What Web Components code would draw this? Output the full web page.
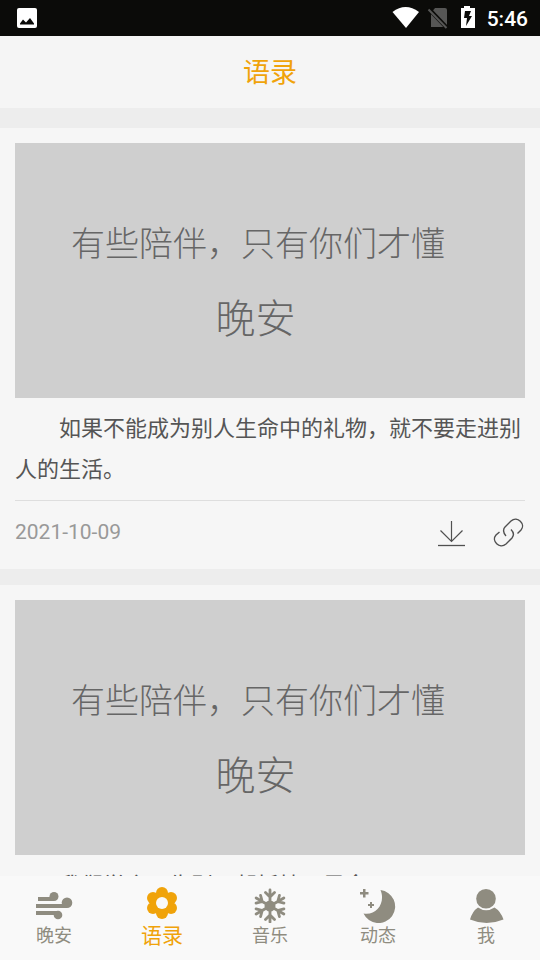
<!DOCTYPE html>
<html lang="zh-CN">
<head>
<meta charset="utf-8">
<meta name="viewport" content="width=device-width, initial-scale=1">
<title>语录</title>
<style>
html, body { height: 100%; margin: 0; }
body { font-family: Roboto, "Noto Sans CJK SC", sans-serif; background: #ededed; color: #555; }
</style>
</head>
<body>
<quote-app></quote-app>
<script>
const define = (name, html) => customElements.define(name, class extends HTMLElement {
  constructor() {
    super();
    const t = document.createElement('template');
    t.innerHTML = html;
    this.attachShadow({ mode: 'open' }).append(t.content.cloneNode(true));
  }
});

define('status-bar', `
<style>
:host { display: flex; align-items: center; height: 36px; flex: none; padding: 0 12px 0 17px; background: #0b0b09; color: #fff; }
svg { display: block; }
.right { margin-left: auto; display: flex; align-items: center; }
time { font-size: 21px; font-weight: 500; line-height: 36px; margin-left: 11px; padding-top: 1px; }
</style>
<svg width="20" height="36" viewBox="0 0 20 36"><rect y="8" width="20" height="20" rx="2" fill="#fff"/><path d="M3 24.5v-1l3-4 3 3 4-4.500 4 5.500v1z" fill="#0b0b09"/></svg>
<div class="right">
<svg width="84" height="36" viewBox="0 0 84 36">
<path d="M0.500 12Q13.500 2 27 12L14 28z" fill="#fff"/>
<path d="M43 8h10q2 0 2 2v17H39V13z" fill="#565655"/><path d="M36 8l20 21" stroke="#0b0b09" stroke-width="4"/><path d="M36.500 9.500l18 18.500" stroke="#565655" stroke-width="2"/>
<path d="M69 8h3V6h6v2h5v20H69z" fill="#fff"/><path d="M73 11h6l-2 5h3l-6 10 1-8h-3z" fill="#0b0b09"/>
</svg>
<time>5:46</time>
</div>`);

define('page-title', `
<style>
:host { display: block; flex: none; background: #f5f5f5; }
h1 { margin: 0; padding: 2px 0 0; font-size: 27px; font-weight: 400; line-height: 70px; text-align: center; color: #f0a30a; }
</style>
<h1><slot></slot></h1>`);

define('quote-picture', `
<style>
:host { display: flex; flex-direction: column; aspect-ratio: 2 / 1; box-sizing: border-box; padding: 76px 81px 0 56px; background: #cfcfcf; color: #666; text-align: center; white-space: nowrap; font-weight: 300; }
.first { font-size: 34px; line-height: 50px; }
.second { font-size: 40px; line-height: 60px; padding-top: 21px; padding-right: 4px; }
</style>
<div class="first">有些陪伴，只有你们才懂</div>
<div class="second">晚安</div>`);

define('icon-button', `
<style>
:host { display: block; }
button { display: block; padding: 0; border: 0; background: none; color: #505050; cursor: pointer; }
::slotted(svg) { display: block; }
</style>
<button type="button"><slot></slot></button>`);

define('quote-card', `
<style>
:host { display: block; background: #f6f6f6; padding: 15px 15px 0; }
p { margin: 0; padding: 10px 0; font-size: 22px; line-height: 41px; text-indent: 2em; color: #555; }
footer { display: flex; align-items: center; height: 68px; border-top: 1px solid #dedede; }
.date { font-size: 21px; line-height: 30px; color: #999; margin-right: auto; padding-bottom: 6px; }
.tools { display: flex; gap: 28px; padding: 0 1px 2px 0; }
</style>
<article>
<quote-picture></quote-picture>
<p><slot></slot></p>
<footer>
<span class="date"><slot name="date"></slot></span>
<div class="tools">
<icon-button><svg role="img" aria-label="下载" width="28" height="32" viewBox="0 0 28 32" fill="none" stroke="currentColor" stroke-width="1.200"><path d="M14.500 3v20.500M3.500 12.500l11 11 11-11"/><path d="M1 27.500h27" stroke-width="1.300"/></svg></icon-button>
<icon-button><svg role="img" aria-label="链接" width="31" height="32" viewBox="0 0 31 32" fill="none" stroke="currentColor" stroke-width="1.400"><path d="M13 18C10 15 10 11 12 9L18 3C24.500 -2.500 33 6 28 12L24.500 15.500M18 11.500C21 14.500 21 17.500 19 20L13 26C6.500 31.500-2 23 3 17L6.500 14"/></svg></icon-button>
</div>
</footer>
</article>`);

define('nav-item', `
<style>
:host { display: block; flex: 1; min-width: 0; color: #8f8c80; font-size: 18px; }
:host([active]) { color: #f0a30a; font-size: 21px; }
a { display: flex; flex-direction: column; align-items: center; color: inherit; text-decoration: none; line-height: 26px; padding-top: 9px; }
::slotted(svg) { display: block; }
</style>
<a href="#"><slot name="icon"></slot><span><slot></slot></span></a>`);

define('tab-bar', `
<style>
:host { display: block; flex: none; background: #f9f9f9; }
nav { display: flex; height: 84px; }
</style>
<nav>
<nav-item><svg slot="icon" width="38" height="38" viewBox="0 0 38 38" fill="currentColor"><path d="M3 12h16v4H3zM1 19h31v4H1zM1 26h22v4H1z"/><circle cx="19" cy="11.500" r="4.500"/><circle cx="32" cy="17.700" r="5.300"/><circle cx="23" cy="30" r="4.300"/></svg>晚安</nav-item>
<nav-item active><svg slot="icon" width="38" height="38" viewBox="0 0 38 38" fill="currentColor"><circle cx="19" cy="8" r="6"/><circle cx="28" cy="13" r="6"/><circle cx="28" cy="23" r="6"/><circle cx="19" cy="28" r="6"/><circle cx="10" cy="23" r="6"/><circle cx="10" cy="13" r="6"/><circle cx="19" cy="18" r="11.500"/><circle cx="19" cy="18" r="6" fill="#f9f9f9"/></svg>语录</nav-item>
<nav-item><svg slot="icon" width="38" height="38" viewBox="0 0 38 38" fill="none" stroke="currentColor" stroke-width="2.800" stroke-linecap="round"><circle cx="19" cy="21" r="5.500" fill="currentColor" stroke="none"/><g><path d="M19 5v32M14.500 7.500L19 12l4.500-4.500M14.500 34.500L19 30l4.500 4.500"/></g><g transform="rotate(60 19 21)"><path d="M19 5v32M14.500 7.500L19 12l4.500-4.500M14.500 34.500L19 30l4.500 4.500"/></g><g transform="rotate(120 19 21)"><path d="M19 5v32M14.500 7.500L19 12l4.500-4.500M14.500 34.500L19 30l4.500 4.500"/></g></svg>音乐</nav-item>
<nav-item><svg slot="icon" width="38" height="38" viewBox="0 0 38 38" fill="currentColor"><path d="M21.500 5A16.600 16.600 0 1 1 4.500 28.500C17 31 27 18 21.500 5zM4 4h2.500v3h3v2.500h-3v3H4v-3H1V7h3zM11 17h2v2h2v2h-2v2h-2v-2H9v-2h2z"/></svg>动态</nav-item>
<nav-item><svg slot="icon" width="38" height="38" viewBox="0 0 38 38" fill="currentColor"><circle cx="19" cy="13.800" r="9.800"/><path d="M11 22.500Q19 28 27.500 22.500Q33.500 26 36.500 34.500Q19.500 41.500 3 34.500Q5.500 26 11 22.500z"/></svg>我</nav-item>
</nav>`);

define('quote-app', `
<style>
:host { display: flex; flex-direction: column; height: 100vh; overflow: hidden; }
main { flex: 1; min-height: 0; overflow: hidden; padding-top: 20px; display: flex; flex-direction: column; gap: 16px; }
quote-card { flex: none; }
</style>
<status-bar></status-bar>
<page-title>语录</page-title>
<main>
<quote-card>如果不能成为别人生命中的礼物，就不要走进别人的生活。<span slot="date">2021-10-09</span></quote-card>
<quote-card>我们学会了告别，却抵挡了思念</quote-card>
</main>
<tab-bar></tab-bar>`);
</script>
</body>
</html>
